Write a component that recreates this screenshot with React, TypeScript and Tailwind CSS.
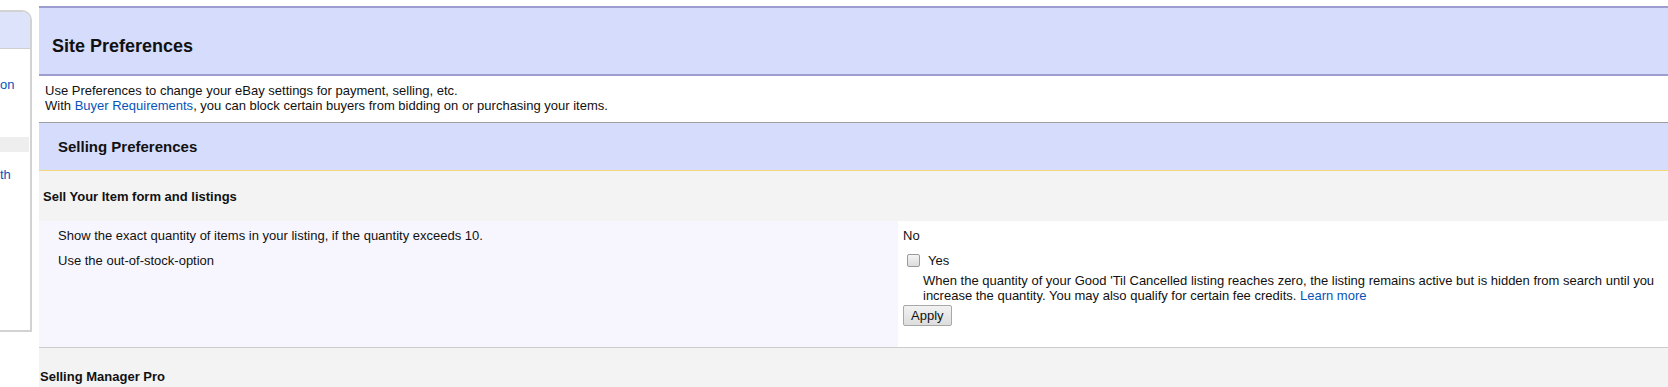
const SideNav = () => {
  return (
    <div className="mt-[10px] h-[322px] w-[32px] shrink-0 overflow-hidden rounded-tr-[10px] border-t-2 border-r-2 border-b-2 border-[#d2d2d2] bg-white">
      {/* header strip */}
      <div className="h-[37px] border-b border-[#cfcfcf] bg-[#dee3fc]"></div>
      <div className="relative text-[13px] leading-[15px] text-[#0654ba]">
        <div className="mt-[28px] h-[15px] whitespace-nowrap">on</div>
        <div className="mt-[45px] h-[15px] w-[29px] bg-[#eeeeee]"></div>
        <div className="mt-[15px] h-[15px] whitespace-nowrap">th</div>
      </div>
    </div>
  );
};

const App = () => {
  return (
    <div
      className="flex h-[387px] w-[1668px] overflow-hidden bg-white text-[13px] leading-[15px] text-[#111]"
      style={{ fontFamily: '"Liberation Sans", Arial, sans-serif' }}
    >
      <SideNav />

      <div className="ml-[7px] flex-1">
        {/* Page title band */}
        <div className="mt-[6px] h-[70px] border-y-2 border-[#9d9dcf] bg-[#d6dcfc] pl-[13px] pt-[28px]">
          <h1 className="text-[18px] font-bold leading-[21px] text-[#111]">Site Preferences</h1>
        </div>

        {/* Intro */}
        <div className="h-[47px] border-b border-[#9f9f9f] pl-[6px] pt-[7px]">
          <p>Use Preferences to change your eBay settings for payment, selling, etc.</p>
          <p>
            With <span className="text-[#0654ba]">Buyer Requirements</span>, you can block certain buyers from bidding on or
            purchasing your items.
          </p>
        </div>

        {/* Section band */}
        <div className="flex h-[48px] items-center border-b border-[#f5d67a] bg-[#d6dcfc] pl-[19px]">
          <h2 className="text-[15px] font-bold leading-[18px]">Selling Preferences</h2>
        </div>

        {/* Group header */}
        <div className="flex h-[50px] items-center bg-[#f3f3f3] pl-[4px]">
          <h3 className="text-[13px] font-bold">Sell Your Item form and listings</h3>
        </div>

        {/* Settings rows */}
        <div className="flex h-[127px] border-b border-[#cccccc]">
          <div className="flex w-[859px] flex-col gap-[10px] bg-[#f7f6fe] pl-[19px] pt-[7px]">
            <div>Show the exact quantity of items in your listing, if the quantity exceeds 10.</div>
            <div>Use the out-of-stock-option</div>
          </div>
          <div className="flex-1 bg-white pl-[5px] pt-[7px]">
            <div>No</div>
            <div className="mt-[10px] flex h-[15px] items-center pl-[4px]">
              <span className="h-[13px] w-[13px] rounded-[2px] border border-[#9a9a9a] bg-gradient-to-b from-[#f4f4f4] to-[#dcdcdc]"></span>
              <span className="ml-[8px]">Yes</span>
            </div>
            <p className="mt-[5px] pl-[20px]">
              When the quantity of your Good 'Til Cancelled listing reaches zero, the listing remains active but is hidden from
              search until you increase the quantity. You may also qualify for certain fee credits.{" "}
              <span className="text-[#0654ba]">Learn more</span>
            </p>
            <button className="mt-[2px] h-[21px] rounded-[2px] border border-[#a8a8a8] bg-gradient-to-b from-[#f2f2f2] to-[#dddddd] px-[7px] text-[13px] leading-[15px] text-[#111]">
              Apply
            </button>
          </div>
        </div>

        {/* Next group */}
        <div className="h-[60px] bg-[#f3f3f3] pl-[1px] pt-[21px]">
          <h3 className="text-[13px] font-bold">Selling Manager Pro</h3>
        </div>
      </div>
    </div>
  );
};

export default App;
